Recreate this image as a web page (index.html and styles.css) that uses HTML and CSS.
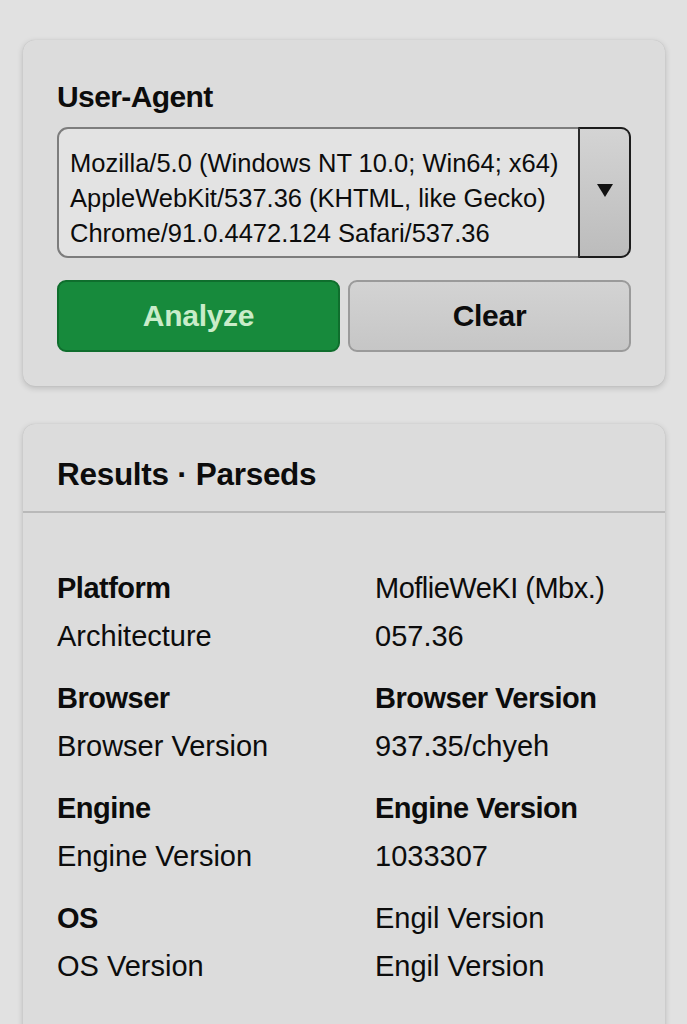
FILE: index.html
```html
<!DOCTYPE html>
<html>
<head>
<meta charset="utf-8">
<link rel="stylesheet" href="styles.css">
</head>
<body>
<main class="page">
  <section class="card input-card">
    <h2 class="label">User-Agent</h2>
    <div class="ua-box">
      <div class="ua-text">Mozilla/5.0 (Windows NT 10.0; Win64; x64)<br>AppleWebKit/537.36 (KHTML, like Gecko)<br>Chrome/91.0.4472.124 Safari/537.36</div>
      <div class="ua-toggle"><span class="tri"></span></div>
    </div>
    <div class="actions">
      <button class="btn btn-primary">Analyze</button>
      <button class="btn btn-secondary">Clear</button>
    </div>
  </section>

  <section class="card results-card">
    <header class="results-head">Results · Parseds</header>
    <div class="results">
      <div class="group">
        <div class="k b">Platform</div><div class="v tight">MoflieWeKI (Mbx.)</div>
        <div class="k">Architecture</div><div class="v">057.36</div>
      </div>
      <div class="group">
        <div class="k b">Browser</div><div class="v b">Browser Version</div>
        <div class="k">Browser Version</div><div class="v">937.35/chyeh</div>
      </div>
      <div class="group">
        <div class="k b">Engine</div><div class="v b">Engine Version</div>
        <div class="k">Engine Version</div><div class="v">1033307</div>
      </div>
      <div class="group">
        <div class="k b">OS</div><div class="v">Engil Version</div>
        <div class="k">OS Version</div><div class="v">Engil Version</div>
      </div>
    </div>
  </section>
</main>
</body>
</html>
```

FILE: styles.css
```css
* { box-sizing: border-box; }
html, body { margin: 0; padding: 0; }
body {
  background: #e1e1e1;
  font-family: "Liberation Sans", Arial, sans-serif;
  color: #0c0c0c;
  height: 1024px;
  overflow: hidden;
}
.page {
  padding: 40px 22px 0 23px;
  display: flex;
  flex-direction: column;
  gap: 38px;
}
.card {
  background: #dcdcdc;
  border-radius: 12px;
  box-shadow: 0 2px 6px rgba(0,0,0,0.18), 0 0 1px rgba(0,0,0,0.15);
}
.input-card {
  padding: 37px 34px 34px 34px;
}
.label {
  margin: 0 0 10px 0;
  font-size: 30px;
  font-weight: 700;
  line-height: 40px;
  letter-spacing: -0.6px;
}
.ua-box {
  display: flex;
  height: 131px;
  border: 2px solid #7d7d7d;
  border-radius: 11px;
  background: #e3e3e3;
}
.ua-text {
  flex: 1;
  min-width: 0;
  overflow: hidden;
  padding: 17px 0 0 11px;
  font-size: 25.5px;
  line-height: 35px;
  white-space: nowrap;
}
.ua-toggle {
  flex: 0 0 53px;
  border: 2px solid #1c1c1c;
  border-left-color: #2a2a2a;
  border-radius: 0 10px 10px 0;
  margin: -2px -2px -2px 0;
  background: linear-gradient(#d4d4d4, #bcbcbc);
  display: flex;
  align-items: center;
  justify-content: center;
}
.tri {
  width: 0; height: 0;
  border-left: 8px solid transparent;
  border-right: 8px solid transparent;
  border-top: 13px solid #111;
  margin-top: -4px;
}
.actions {
  display: flex;
  gap: 8px;
  margin-top: 22px;
}
.btn {
  flex: 1;
  height: 72px;
  border-radius: 9px;
  font-family: inherit;
  font-size: 30px;
  font-weight: 700;
  letter-spacing: -0.3px;
}
.btn-primary {
  background: #178a3c;
  border: 2px solid #0f6e2d;
  color: #c9ecc9;
}
.btn-secondary {
  background: linear-gradient(#d3d3d3, #c6c6c6);
  border: 2px solid #9a9a9a;
  color: #0c0c0c;
}
.results-card {
  height: 640px;
  border-radius: 12px 12px 0 0;
}
.results-head {
  height: 89px;
  padding: 30px 34px 0;
  font-size: 31.5px;
  font-weight: 700;
  line-height: 40px;
  letter-spacing: -0.3px;
  border-bottom: 2px solid #b9b9b9;
}
.results {
  padding: 51px 34px 0;
  display: flex;
  flex-direction: column;
  gap: 14px;
}
.group {
  display: grid;
  grid-template-columns: 318px 1fr;
  line-height: 48px;
  font-size: 29px;
  white-space: nowrap;
}
.b { font-weight: 700; letter-spacing: -0.5px; }
.tight { letter-spacing: -0.5px; }
```
